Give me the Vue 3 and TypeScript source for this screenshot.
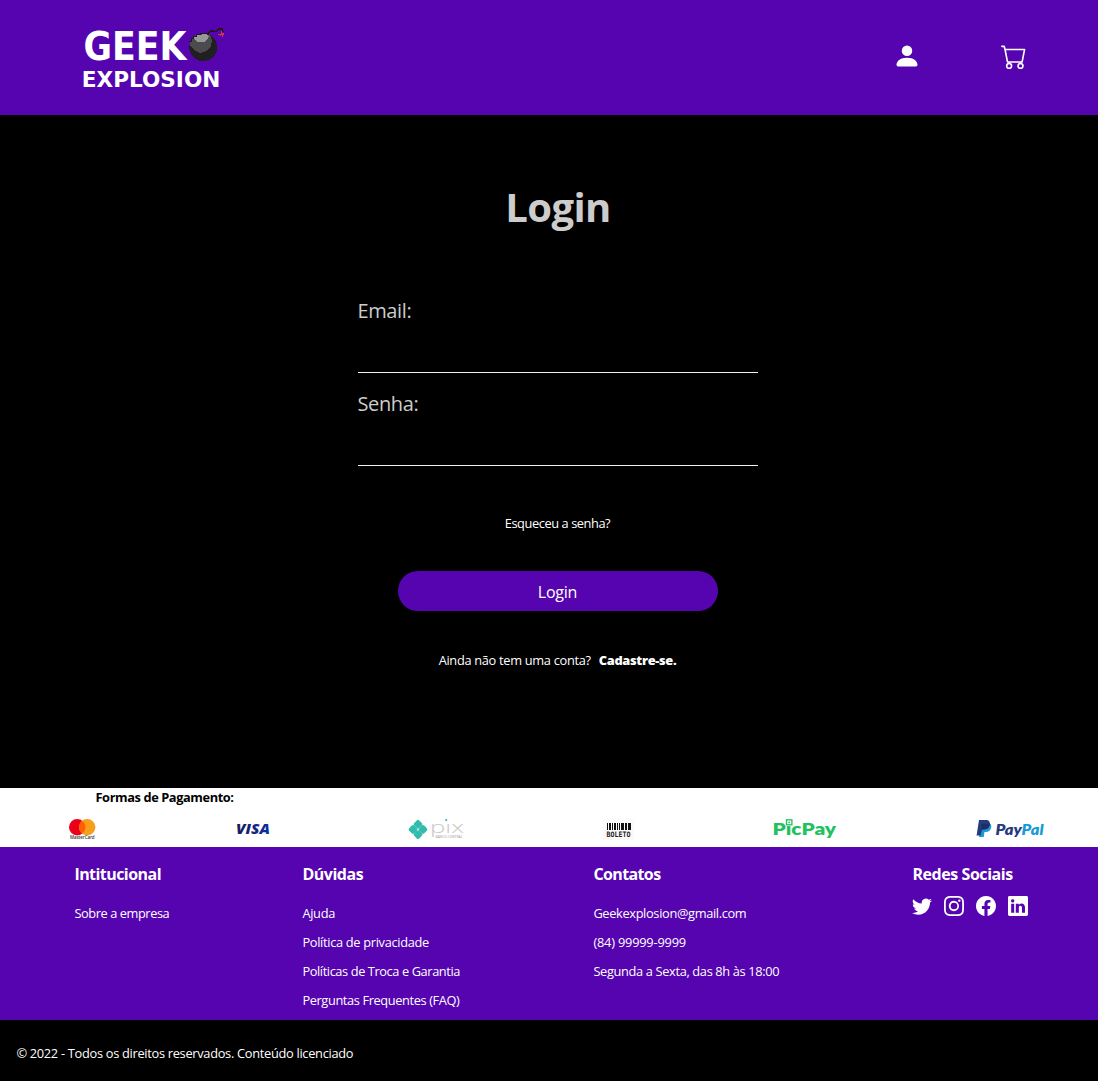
<script setup lang="ts">
interface Line {
  text: string
  track: number
}

interface Column {
  title: Line
  items: Line[]
}

const columns: Column[] = [
  {
    title: { text: 'Intitucional', track: -0.55 },
    items: [{ text: 'Sobre a empresa', track: -0.42 }],
  },
  {
    title: { text: 'Dúvidas', track: -0.48 },
    items: [
      { text: 'Ajuda', track: -0.3 },
      { text: 'Política de privacidade', track: -0.31 },
      { text: 'Políticas de Troca e Garantia', track: -0.4 },
      { text: 'Perguntas Frequentes (FAQ)', track: -0.38 },
    ],
  },
  {
    title: { text: 'Contatos', track: -0.62 },
    items: [
      { text: 'Geekexplosion@gmail.com', track: -0.34 },
      { text: '(84) 99999-9999', track: -0.2 },
      { text: 'Segunda a Sexta, das 8h às 18:00', track: -0.34 },
    ],
  },
]

const socials: { name: string; path: string }[] = [
  {
    name: 'Twitter',
    path: 'M5.026 15c6.038 0 9.341-5.003 9.341-9.334 0-.14 0-.282-.006-.422A6.685 6.685 0 0 0 16 3.542a6.658 6.658 0 0 1-1.889.518 3.301 3.301 0 0 0 1.447-1.817 6.533 6.533 0 0 1-2.087.793A3.286 3.286 0 0 0 7.875 6.03a9.325 9.325 0 0 1-6.767-3.429 3.289 3.289 0 0 0 1.018 4.382A3.323 3.323 0 0 1 .64 6.575v.045a3.288 3.288 0 0 0 2.632 3.218 3.203 3.203 0 0 1-.865.115 3.23 3.23 0 0 1-.614-.057 3.283 3.283 0 0 0 3.067 2.277A6.588 6.588 0 0 1 .78 13.58a6.32 6.32 0 0 1-.78-.045A9.344 9.344 0 0 0 5.026 15z',
  },
  {
    name: 'Instagram',
    path: 'M8 0C5.829 0 5.556.01 4.703.048 3.85.088 3.269.222 2.76.42a3.917 3.917 0 0 0-1.417.923A3.927 3.927 0 0 0 .42 2.76C.222 3.268.087 3.85.048 4.7.01 5.555 0 5.827 0 8.001c0 2.172.01 2.444.048 3.297.04.852.174 1.433.372 1.942.205.526.478.972.923 1.417.444.445.89.719 1.416.923.51.198 1.09.333 1.942.372C5.555 15.99 5.827 16 8 16s2.444-.01 3.298-.048c.851-.04 1.434-.174 1.943-.372a3.916 3.916 0 0 0 1.416-.923c.445-.445.718-.891.923-1.417.197-.509.332-1.09.372-1.942C15.99 10.445 16 10.173 16 8s-.01-2.445-.048-3.299c-.04-.851-.175-1.433-.372-1.941a3.926 3.926 0 0 0-.923-1.417A3.911 3.911 0 0 0 13.24.42c-.51-.198-1.092-.333-1.943-.372C10.443.01 10.172 0 7.998 0h.003zm-.717 1.442h.718c2.136 0 2.389.007 3.232.046.78.035 1.204.166 1.486.275.373.145.64.319.92.599.28.28.453.546.598.92.11.281.24.705.275 1.485.039.843.047 1.096.047 3.231s-.008 2.389-.047 3.232c-.035.78-.166 1.203-.275 1.485a2.47 2.47 0 0 1-.599.919c-.28.28-.546.453-.92.598-.28.11-.704.24-1.485.276-.843.038-1.096.047-3.232.047s-2.39-.009-3.233-.047c-.78-.036-1.203-.166-1.485-.276a2.478 2.478 0 0 1-.92-.598 2.48 2.48 0 0 1-.6-.92c-.109-.281-.24-.705-.275-1.485-.038-.843-.046-1.096-.046-3.233 0-2.136.008-2.388.046-3.231.036-.78.166-1.204.276-1.486.145-.373.319-.64.599-.92.28-.28.546-.453.92-.598.282-.11.705-.24 1.485-.276.738-.034 1.024-.044 2.515-.045v.002zm4.988 1.328a.96.96 0 1 0 0 1.92.96.96 0 0 0 0-1.92zm-4.27 1.122a4.109 4.109 0 1 0 0 8.217 4.109 4.109 0 0 0 0-8.217zm0 1.441a2.667 2.667 0 1 1 0 5.334 2.667 2.667 0 0 1 0-5.334z',
  },
  {
    name: 'Facebook',
    path: 'M16 8.049c0-4.446-3.582-8.05-8-8.05C3.58 0-.002 3.603-.002 8.05c0 4.017 2.926 7.347 6.75 7.951v-5.625h-2.03V8.05H6.75V6.275c0-2.017 1.195-3.131 3.022-3.131.876 0 1.791.157 1.791.157v1.98h-1.009c-.993 0-1.303.621-1.303 1.258v1.51h2.218l-.354 2.326H9.25V16c3.824-.604 6.75-3.934 6.75-7.951z',
  },
  {
    name: 'LinkedIn',
    path: 'M0 1.146C0 .513.526 0 1.175 0h13.65C15.474 0 16 .513 16 1.146v13.708c0 .633-.526 1.146-1.175 1.146H1.175C.526 16 0 15.487 0 14.854V1.146zm4.943 12.248V6.169H2.542v7.225h2.401zm-1.2-8.212c.837 0 1.358-.554 1.358-1.248-.015-.709-.52-1.248-1.342-1.248-.822 0-1.359.54-1.359 1.248 0 .694.521 1.248 1.327 1.248h.016zm4.908 8.212V9.359c0-.216.016-.432.08-.586.173-.431.568-.878 1.232-.878.869 0 1.216.662 1.216 1.634v3.865h2.401V9.25c0-2.22-1.184-3.252-2.764-3.252-1.274 0-1.845.7-2.165 1.193v.025h-.016a5.54 5.54 0 0 1 .016-.025V6.169h-2.4c.03.678 0 7.225 0 7.225h2.4z',
  },
]

// x offset and width of every bar of the boleto barcode
const bars: [number, number][] = [
  [4, 1], [6, 2], [9, 1], [11, 2], [14, 1], [16, 1], [18, 3], [22, 2], [25, 3],
]

const track = (px: number) => ({ letterSpacing: px + 'px' })
</script>

<template>
  <div class="page">
    <header class="top">
      <svg class="brand" width="145" height="66" viewBox="80 25 145 66">
        <text class="brand-text" x="83.5" y="60" font-size="39.5" textLength="103" lengthAdjust="spacingAndGlyphs">GEEK</text>
        <text class="brand-text" x="81.8" y="87" font-size="22" textLength="138.5" lengthAdjust="spacingAndGlyphs">EXPLOSION</text>
        <g shape-rendering="crispEdges">
          <circle cx="203.3" cy="47.2" r="14" fill="#211f22" />
          <path d="M189.500 45l1.500-6 4-4 7-2 8 1 2 6-1 6-4 5-7 2-6-3-3-4z" fill="#4b4a4d" />
          <path d="M194 37l4-2 8-1 3 2-1 3-4 3h-6l-4-3z" fill="#98979a" />
          <path d="M189 41h2v-3h2v-2h3v-2h4v-1h8v2" fill="none" stroke="#1c1a1d" stroke-width="1" />
          <path d="M208 35l2-4h4l2 1 2-3h4l1 3" fill="none" stroke="#1c1a1d" stroke-width="1.300" />
          <path d="M221 31h1v2h2v2h-1v2h-1v-2h-1v1h-1v-1h-2v-1h3z" fill="#d8353d" />
        </g>
      </svg>
      <nav class="actions">
        <svg width="28" height="28" viewBox="0 0 16 16" fill="#fff">
          <path d="M3 14s-1 0-1-1 1-4 6-4 6 3 6 4-1 1-1 1H3zm5-6a3 3 0 1 0 0-6 3 3 0 0 0 0 6z" />
        </svg>
        <svg width="26" height="25" viewBox="0 0 16 16" preserveAspectRatio="none" fill="#fff">
          <path d="M0 1.5A.5.5 0 0 1 .5 1H2a.5.5 0 0 1 .485.379L2.89 3H14.5a.5.5 0 0 1 .491.592l-1.5 8A.5.5 0 0 1 13 12H4a.5.5 0 0 1-.491-.408L2.01 3.607 1.61 2H.5a.5.5 0 0 1-.5-.5zM3.102 4l1.313 7h8.17l1.313-7H3.102zM5 12a2 2 0 1 0 0 4 2 2 0 0 0 0-4zm7 0a2 2 0 1 0 0 4 2 2 0 0 0 0-4zm-7 1a1 1 0 1 1 0 2 1 1 0 0 1 0-2zm7 0a1 1 0 1 1 0 2 1 1 0 0 1 0-2z" />
        </svg>
      </nav>
    </header>

    <main class="main">
      <form class="login" @submit.prevent>
        <h1>Login</h1>
        <label class="field">Email:<input type="email" /></label>
        <label class="field">Senha:<input type="password" /></label>
        <a class="forgot">Esqueceu a senha?</a>
        <button type="submit">Login</button>
        <p class="signup"><span>Ainda não tem uma conta?</span><b>Cadastre-se.</b></p>
      </form>
    </main>

    <section class="payments">
      <h2>Formas de Pagamento:</h2>
      <div class="brands">
        <svg width="27" height="21" viewBox="0 0 27 21">
          <circle cx="8.2" cy="8.2" r="8.2" fill="#eb001b" />
          <circle cx="18.2" cy="8.2" r="8.2" fill="#f79e1b" />
          <path d="M13.2 1.7a8.2 8.2 0 0 1 0 13 8.2 8.2 0 0 1 0-13z" fill="#ff5f00" />
          <text class="sans" x="1" y="20" font-size="4.4" font-weight="600" fill="#333" textLength="24.5">MasterCard</text>
        </svg>
        <svg width="34" height="21" viewBox="0 0 34 21">
          <defs>
            <linearGradient id="visa">
              <stop offset="0" stop-color="#171c61" />
              <stop offset="1" stop-color="#0a2fa0" />
            </linearGradient>
          </defs>
          <text class="sans" x="1" y="15" font-size="14.6" font-weight="800" font-style="italic" fill="url(#visa)" textLength="33.8" lengthAdjust="spacingAndGlyphs">VISA</text>
        </svg>
        <svg width="57" height="21" viewBox="0 0 57 21">
          <g fill="#32bcad">
            <rect x="-3.6" y="-3.6" width="7.2" height="7.2" rx="1.8" transform="translate(10 5.2) rotate(45)" />
            <rect x="-3.6" y="-3.6" width="7.2" height="7.2" rx="1.8" transform="translate(5 10.4) rotate(45)" />
            <rect x="-3.6" y="-3.6" width="7.2" height="7.2" rx="1.8" transform="translate(15 10.4) rotate(45)" />
            <rect x="-3.6" y="-3.6" width="7.2" height="7.2" rx="1.8" transform="translate(10 15.6) rotate(45)" />
            <circle cx="38.2" cy="1.1" r="1.1" />
          </g>
          <text class="light" x="22" y="14" font-size="17" fill="#c8c8c8" textLength="34" lengthAdjust="spacingAndGlyphs">pıx</text>
          <text class="sans" x="27.5" y="18.8" font-size="3.4" fill="#999" textLength="27">BANCO CENTRAL</text>
        </svg>
        <svg width="31" height="21" viewBox="0 0 31 21">
          <rect width="31" height="21" fill="#fafafa" />
          <rect v-for="[x, w] in bars" :key="x" :x="x" y="4" :width="w" height="7" fill="#111" />
          <text class="mono" x="3.6" y="18.2" font-size="7.4" font-weight="700" fill="#222" textLength="24" lengthAdjust="spacingAndGlyphs">BOLETO</text>
        </svg>
        <svg width="64" height="21" viewBox="0 0 64 21">
          <text class="round" x="-0.5" y="16" font-size="17.5" font-weight="800" fill="#21c25e" textLength="63.5" lengthAdjust="spacingAndGlyphs">PıcPay</text>
          <rect x="13.5" y="0.8" width="5.4" height="5" fill="#fff" stroke="#21c25e" stroke-width="1.3" />
          <rect x="15.5" y="2.6" width="1.5" height="1.5" fill="#21c25e" />
        </svg>
        <svg width="68" height="21" viewBox="0 0 68 21">
          <path d="M5 4h7c2.5 0 3.8 1.8 3.2 4.5-.7 3.2-2.7 4.5-5.5 4.5H8.5l-.8 5H3z" fill="#179bd7" />
          <path d="M3 1h6.8c3 0 4.6 1.8 4 4.6-.7 3.5-2.8 4.9-6 4.9H5.7l-.9 6H.6z" fill="#253b80" />
          <path d="M5.5 4.8h8.3c.1 3.7-2.3 5.7-6 5.7H5.7l-.9 4z" fill="#222d65" />
          <text class="round" x="19.4" y="15.5" font-size="14" font-weight="800" font-style="italic" fill="#253b80" textLength="26.5" lengthAdjust="spacingAndGlyphs">Pay</text>
          <text class="round" x="45.6" y="15.5" font-size="14" font-weight="800" font-style="italic" fill="#179bd7" textLength="22" lengthAdjust="spacingAndGlyphs">Pal</text>
        </svg>
      </div>
    </section>

    <section class="links">
      <div v-for="col in columns" :key="col.title.text" class="col">
        <h3 :style="track(col.title.track)">{{ col.title.text }}</h3>
        <ul>
          <li v-for="item in col.items" :key="item.text" :style="track(item.track)">{{ item.text }}</li>
        </ul>
      </div>
      <div class="col">
        <h3 :style="track(-0.43)">Redes Sociais</h3>
        <div class="socials">
          <svg v-for="s in socials" :key="s.name" width="20" height="20" viewBox="0 0 16 16" fill="#fff" :aria-label="s.name">
            <path :d="s.path" />
          </svg>
        </div>
      </div>
    </section>

    <footer class="legal">© 2022 - Todos os direitos reservados. Conteúdo licenciado</footer>
  </div>
</template>

<style>
body {
  margin: 0;
  background: #000;
}
</style>

<style scoped>
.page {
  height: 1081px;
  display: flex;
  flex-direction: column;
  overflow: hidden;
  background: #000;
  color: #fff;
  font: 12.8px/17px "Open Sans", "Noto Sans", sans-serif;
}
h1, h2, h3, p, ul {
  margin: 0;
  padding: 0;
}
.top {
  height: 115px;
  box-sizing: border-box;
  padding: 0 71px 0 80px;
  display: flex;
  align-items: center;
  justify-content: space-between;
  background: #5504b0;
}
.brand,
.brands svg {
  overflow: visible;
}
.brand-text {
  font-family: "DejaVu Sans", sans-serif;
  font-weight: 700;
  fill: #fff;
}
.actions {
  display: flex;
  align-items: center;
  gap: 80px;
  padding-bottom: 3px;
}
.main {
  height: 673px;
  box-sizing: border-box;
  padding: 65px 0 0 358px;
}
.login {
  width: 400px;
  display: flex;
  flex-direction: column;
  align-items: center;
}
h1 {
  margin-bottom: 63px;
  font-size: 40px;
  line-height: 54px;
  letter-spacing: -0.6px;
  color: #ccc;
}
.field {
  width: 400px;
  margin-bottom: 17px;
  font-size: 20px;
  line-height: 27px;
  letter-spacing: -0.35px;
  color: #ccc;
  text-indent: -0.6px;
}
.field input {
  display: block;
  width: 100%;
  height: 49px;
  box-sizing: border-box;
  padding: 0;
  border: 0;
  border-bottom: 1px solid #f2f2f2;
  background: transparent;
  color: #fff;
  font: inherit;
  outline: none;
}
.forgot {
  margin-top: 32px;
  padding-right: 1px;
  letter-spacing: -0.42px;
}
button {
  width: 320px;
  height: 40px;
  margin: 39px 0 41px;
  padding: 3px 1px 0 0;
  border: 0;
  border-radius: 20px;
  background: #5504b0;
  color: #fff;
  font: 16px/37px "Open Sans", sans-serif;
  letter-spacing: -0.25px;
}
.signup {
  display: flex;
  gap: 8px;
  padding-right: 1px;
  letter-spacing: -0.3px;
}
.signup b {
  font-weight: 800;
}
.payments {
  height: 59px;
  background: #fff;
}
.payments h2 {
  height: 31px;
  padding-left: 95.5px;
  font-size: 12.8px;
  line-height: 18px;
  letter-spacing: -0.4px;
  color: #000;
}
.brands {
  display: flex;
  justify-content: space-between;
  padding: 0 54px 0 69px;
}
.sans {
  font-family: "Open Sans", sans-serif;
}
.light {
  font-family: "Open Sans", sans-serif;
  font-weight: 300;
}
.mono {
  font-family: "DejaVu Sans Mono", monospace;
}
.round {
  font-family: Lato, sans-serif;
}
.links {
  height: 173px;
  box-sizing: border-box;
  padding: 16px 0 0 74.4px;
  display: grid;
  grid-template-columns: 228px 291px 319px 1fr;
  background: #5504b0;
}
.links h3 {
  margin-bottom: 14px;
  font-size: 16px;
  line-height: 22px;
  white-space: nowrap;
}
.links ul {
  list-style: none;
}
.links li {
  line-height: 29px;
  white-space: nowrap;
}
.socials {
  display: flex;
  gap: 12px;
  margin: -3px 0 0 -0.4px;
}
.legal {
  padding: 25px 16.4px 0;
  letter-spacing: -0.29px;
}
</style>
